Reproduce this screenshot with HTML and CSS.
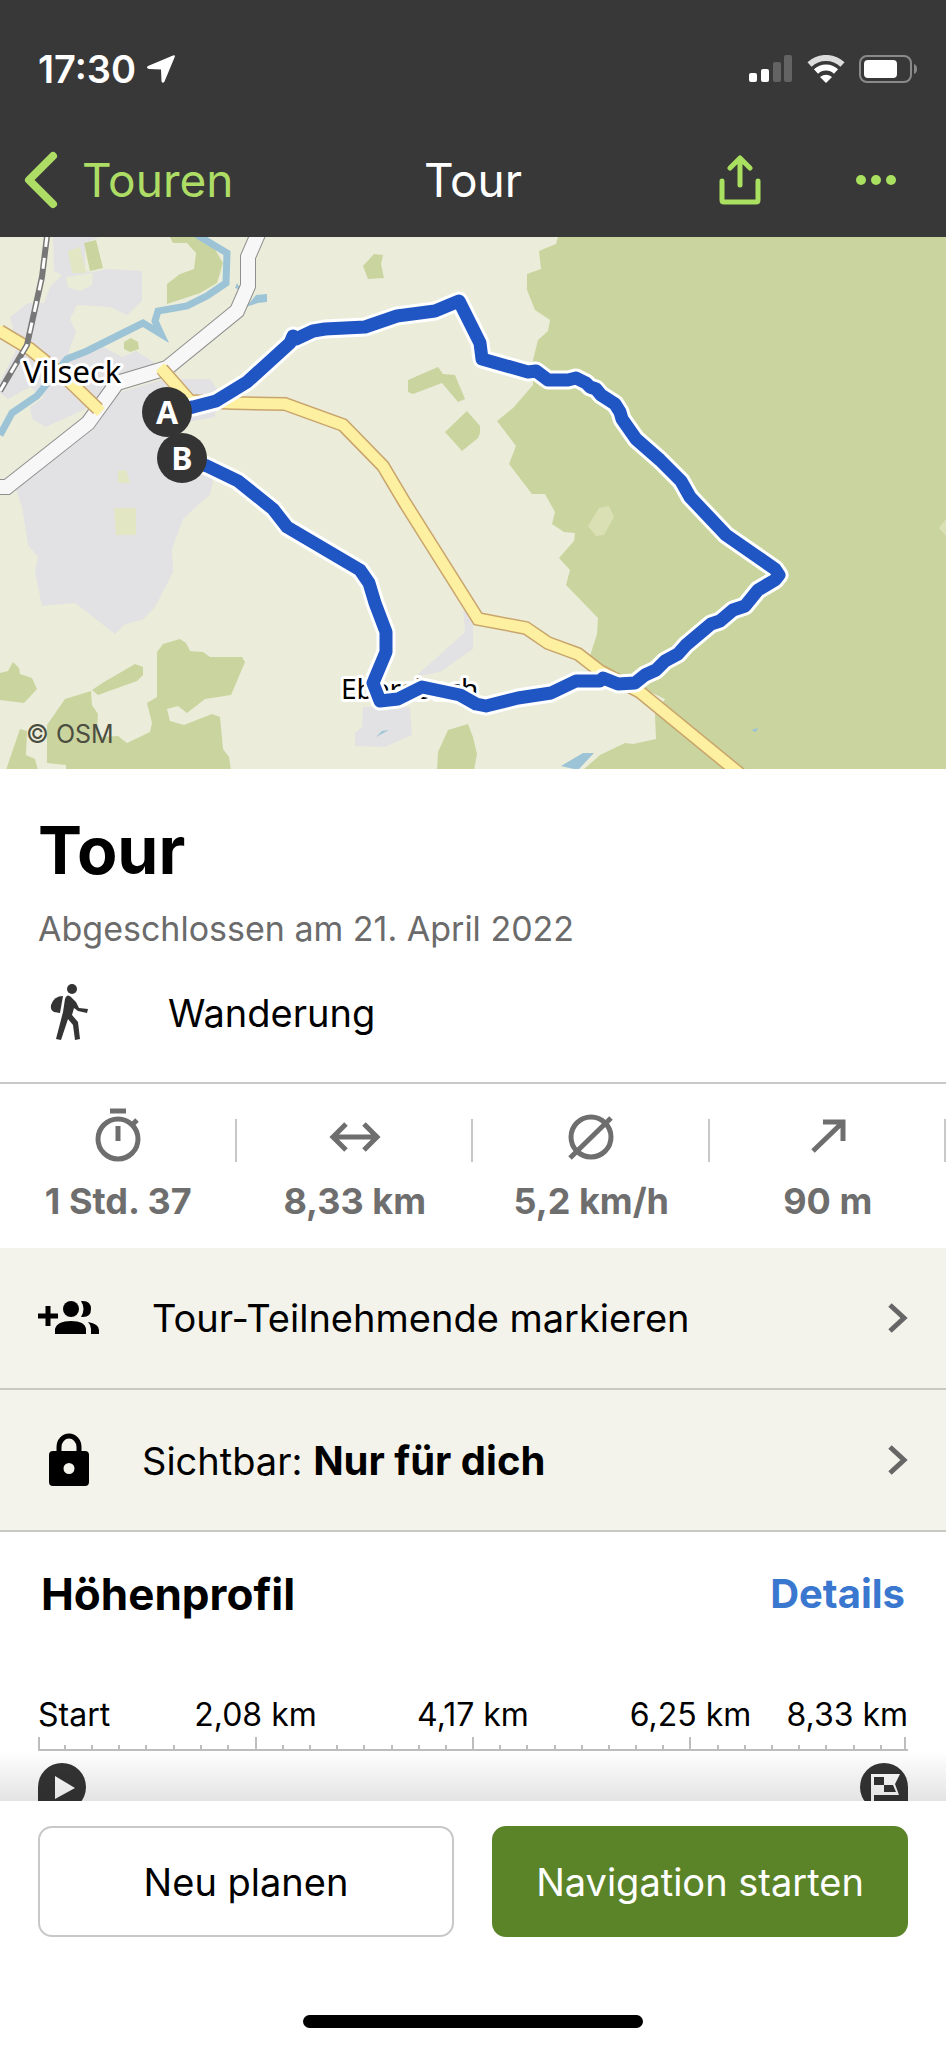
FILE: index.html
```html
<!DOCTYPE html>
<html lang="de">
<head>
  <meta charset="UTF-8">
  <meta name="viewport" content="width=device-width, initial-scale=1">
  <title>Tour</title>
  <link rel="stylesheet" href="styles.css">
</head>
<body>
  <div class="app">
    <header class="header">
      <div class="status-bar">
        <span class="time">17:30</span>
        <svg class="location" width="30" height="30" viewBox="0 0 30 30"><path d="M27 1.500Q29.500 .5 28.700 3L18.500 27.500Q17 30 15.500 27.500L15 15.500L3 15Q-.5 14 2 12Z" fill="#fff"/></svg>
        <div class="status-icons">
          <svg width="44" height="28" viewBox="0 0 44 28">
            <rect x="0" y="18" width="8" height="9" rx="2" fill="#fff"/>
            <rect x="12" y="14" width="8" height="13" rx="2" fill="#fff"/>
            <rect x="24" y="7" width="8" height="20" rx="2" fill="#636363"/>
            <rect x="35" y="0" width="8" height="27" rx="2" fill="#636363"/>
          </svg>
          <svg width="38" height="28" viewBox="0 0 38 28">
            <path d="M2.500 9.500A24 24 0 0 1 35.500 9.500" fill="none" stroke="#dcdcdc" stroke-width="6"/>
            <path d="M9 16.500A14.500 14.500 0 0 1 29 16.500" fill="none" stroke="#fff" stroke-width="6"/>
            <path d="M13 22Q19 17.500 25 22L19 28Z" fill="#fff"/>
          </svg>
          <svg width="59" height="28" viewBox="0 0 59 28">
            <rect x="1" y="1" width="51" height="26" rx="7" fill="none" stroke="#8a8a8a" stroke-width="2"/>
            <rect x="5" y="5" width="33" height="18" rx="4" fill="#fff"/>
            <path d="M55 9Q58 10 58 14T55 19Z" fill="#8a8a8a"/>
          </svg>
        </div>
      </div>
      <nav class="nav">
        <a class="back" href="#">
          <svg width="34" height="58" viewBox="0 0 34 58"><path d="M29 5L5 29L29 53" fill="none" stroke="currentColor" stroke-width="8" stroke-linecap="round" stroke-linejoin="round"/></svg>
          Touren
        </a>
        <span class="nav-title">Tour</span>
        <div class="nav-actions">
          <button class="icon-btn" type="button" aria-label="Teilen">
            <svg width="42" height="50" viewBox="0 0 42 50" fill="none" stroke="currentColor" stroke-width="5" stroke-linecap="round" stroke-linejoin="round"><path d="M21 30V3M11 13L21 3L31 13M3 26V45Q3 47 5 47H37Q39 47 39 45V26"/></svg>
          </button>
          <button class="icon-btn" type="button" aria-label="Mehr">
            <svg width="42" height="12" viewBox="0 0 42 12" fill="currentColor"><circle cx="6" cy="6" r="5"/><circle cx="21" cy="6" r="5"/><circle cx="36" cy="6" r="5"/></svg>
          </button>
        </div>
      </nav>
    </header>

    <main class="content">
      <!-- Karte mit Route -->
      <svg class="map" viewBox="0 0 946 532">
        <rect width="946" height="533" fill="#ebedda"/>
        <!-- Siedlungsflächen -->
        <g fill="#e2e2e4">
          <path d="M53 0H100L85 6V34L93 35L107 32L142 34V64L127 78L110 70L77 68L70 82L76 95L68 116L84 118L100 108L122 120L136 114L165 132L118 144L100 160L85 172L46 190L32 182L30 170L44 160L30 150L8 162L0 156V144L18 110L10 80L28 66L44 66L50 50L62 38L54 34Z"/>
          <path d="M15 250L84 196L120 155L165 142L210 142L217 152L215 180L160 190L215 235L210 258L200 266L183 282L172 312L173 335L155 370L142 383L125 387L115 397L75 366L42 369L35 335L38 320L28 308L22 270Z"/>
          <path d="M363 470H410L412 498L385 510L355 509V496L362 490ZM463 370L473 378V412L440 435L415 440L465 395Z"/>
        </g>
        <path d="M66 40L93 36L92 48L80 54L68 50Z" fill="#e9ecd6"/>
        <path d="M68 14L80 10L86 36L72 36ZM118 234L126 233L130 246L118 246ZM114 271H136V298H116Z" fill="#e2e6c3"/>
        <!-- Wald -->
        <g fill="#cad49e">
          <path d="M558 0L556 7L539 14L541 32L527 37V53L535 73L550 83L548 94L538 103L533 123V148L513 171L497 184L516 209L509 227L532 257H545L555 275L552 287L564 295L575 296L574 304L559 321L570 333L566 348L598 381L597 397L590 419L600 433L640 450L665 462L655 477L656 502L633 507L625 506L600 518L583 533H946V0Z"/>
          <path d="M170 0L173 6L187 6L196 16L194 32L180 37L167 47V67L200 56L217 46L223 26L213 9L200 0Z"/>
          <path d="M84 6L96 3L103 31L90 34ZM124 105L131 101L138 105L139 112L130 115L124 112ZM363 29L374 17L383 18L381 27L384 41L368 42Z"/>
          <path d="M408 143L438 130L443 137L455 138L465 162L458 165L442 146L413 157L408 155ZM467 174L480 189V196L478 201L462 214L445 195Z"/>
          <path d="M0 436L8 434L13 425L19 431L20 437L32 441L37 452L24 466L0 463ZM92 453L104 445L135 427L143 430V438L137 444L98 458Z"/>
          <path d="M65 462L91 454L92 468L98 477L97 493L100 500L118 499L127 506L150 495L152 486L147 466L157 460V415L163 407L180 402L186 406L190 414L203 415L210 420H242L245 425L231 458L205 462L187 476L178 469L167 472L170 484L184 488L212 477L220 480L223 512L229 520L231 533H66V528L47 526V488Z"/>
          <path d="M6 533L20 492L27 494L26 518L35 522L38 533ZM437 533L438 515L448 493L468 487L473 500L477 517L474 533Z"/>
        </g>
        <path d="M599 271L609 269L614 280L604 298L596 299L588 289ZM946 282L939 291L946 299Z" fill="#dbe0b4"/>
        <!-- Gewässer -->
        <path d="M197 -2L227 16L226 46L207 59L187 69L158 74L155 84L161 97L143 86L127 94L113 101L87 114L67 122L37 159L12 176L0 198" fill="none" stroke="#9dc4d6" stroke-width="7"/>
        <path d="M237 46L241 53L235 51ZM246 70L256 58L267 57V65L258 66ZM561 529L583 516H594L578 533ZM376 500L382 494L389 493ZM751 493L758 491L756 495Z" fill="#9dc4d6"/>
        <!-- Straßen -->
        <g fill="none">
          <path d="M258 -3L248 20V49L237 74L167 131L117 146L88 186L7 250H-5" stroke="#8f8f8f" stroke-width="16"/>
          <path d="M258 -3L248 20V49L237 74L167 131L117 146L88 186L7 250H-5" stroke="#f7f7f7" stroke-width="14"/>
          <path d="M0 94L30 112L67 142L98 172M162 132L190 164L233 166L285 167L343 188L383 229L405 266L478 382L526 391L548 406L578 417L600 434L640 455L740 537" stroke="#c9a46c" stroke-width="14"/>
          <path d="M-2 93L30 112L67 142L98 172L101 175M160 130L190 164L233 166L285 167L343 188L383 229L405 266L478 382L526 391L548 406L578 417L600 434L640 455L740 537" stroke="#fdf0a0" stroke-width="11"/>
          <path d="M47 -1L42 40L27 108L0 154" stroke="#777" stroke-width="6"/>
          <path d="M47 -1L42 40L27 108L0 154" stroke="#fff" stroke-width="3" stroke-dasharray="11 11"/>
        </g>
        <text class="place" x="23" y="146" font-size="31">Vilseck</text>
        <text class="place" x="341" y="462" font-size="28">Ebersbach</text>
        <!-- Aufgezeichnete Tour: weißer Rand, darüber die blaue Linie -->
        <defs>
          <path id="route" d="M167 175L193 170L216 164L247 145L290 106L293 99L296 102L313 94L325 92L365 90L397 79L435 74L459 64L480 106L482 122L528 135L536 134L548 143H568L576 141L586 146L590 150L596 152L601 158L615 167L620 175L622 182L636 202L660 223L681 244L690 260L726 298L775 332L779 338L775 343L758 353L745 369L733 373L720 384L711 387L686 408L678 417L665 424L656 433L645 438L635 446L618 447L603 441L600 444H576L551 456L518 461L486 469L476 467L460 458L422 450L398 462L380 464L373 446L386 415V395L375 366L369 346L360 333L287 290L273 272L238 244L207 229L182 221"/>
        </defs>
        <use href="#route" class="route-casing"/>
        <use href="#route" class="route-line"/>
        <circle cx="167" cy="175" r="25" fill="#343434"/>
        <circle cx="182" cy="221" r="25" fill="#343434"/>
        <text class="pin" x="167" y="187">A</text>
        <text class="pin" x="182" y="233">B</text>
        <text class="credit" x="26" y="506">© OSM</text>
      </svg>

      <section class="summary">
        <h1>Tour</h1>
        <p class="date">Abgeschlossen am 21. April 2022</p>
        <div class="sport">
          <svg width="58" height="58" viewBox="0 0 58 58" fill="#343434">
            <circle cx="34" cy="5" r="5"/>
            <path d="M25 12L22 29L16 28Q12 26 13 21Q16 12 25 12Z"/>
            <path d="M27 15Q29 9 33 13L38 18L41 24L50 25L49 29L40 27L36 24L34 31L40 38L42 55L37 56L35 41L30 35L23 56L18 55L25 28Z"/>
          </svg>
          <span>Wanderung</span>
        </div>
      </section>

      <section class="stats">
        <div class="stat">
          <svg width="54" height="54" viewBox="0 0 54 54" fill="none" stroke="currentColor" stroke-width="5"><circle cx="27" cy="31" r="20"/><path d="M19 3H35M27 18V33M41 17L46 12"/></svg>
          <strong>1 Std. 37</strong>
        </div>
        <div class="stat">
          <svg width="54" height="54" viewBox="0 0 54 54" fill="none" stroke="currentColor" stroke-width="5"><path d="M5 29H49M18 16L5 29L18 42M36 16L49 29L36 42"/></svg>
          <strong>8,33 km</strong>
        </div>
        <div class="stat">
          <svg width="54" height="54" viewBox="0 0 54 54" fill="none" stroke="currentColor" stroke-width="5"><circle cx="27" cy="29" r="20"/><path d="M6 50L47 10"/></svg>
          <strong>5,2 km/h</strong>
        </div>
        <div class="stat">
          <svg width="54" height="54" viewBox="0 0 54 54" fill="none" stroke="currentColor" stroke-width="5"><path d="M12 43L42 14M22 14H42V33"/></svg>
          <strong>90 m</strong>
        </div>
      </section>

      <button class="row" type="button">
        <svg class="row-icon" width="62" height="36" viewBox="0 0 62 36">
          <path d="M0 16H20M10 6V26" stroke="#000" stroke-width="5"/>
          <circle cx="33" cy="9" r="8"/>
          <path d="M17 34V29Q19 21 33 21T48 29V34ZM43 1Q53 0 53 9T43 17Q48 9 43 1ZM50 22Q61 24 61 30V34H53V29Q53 25 50 22Z"/>
        </svg>
        <span class="row-label">Tour-Teilnehmende markieren</span>
        <svg class="chevron" width="22" height="32" viewBox="0 0 22 32"><path d="M3 3L17 16L3 29" fill="none" stroke="#666" stroke-width="5"/></svg>
      </button>
      <button class="row row-lock" type="button">
        <svg class="row-icon" width="42" height="54" viewBox="0 0 42 54">
          <path d="M11 20V14A10 11 0 0 1 31 14V20" fill="none" stroke="#000" stroke-width="5"/>
          <path fill-rule="evenodd" d="M5 18H37Q41 18 41 22V49Q41 53 37 53H5Q1 53 1 49V22Q1 18 5 18ZM21 30A5 5 0 1 0 21 41A5 5 0 1 0 21 30Z"/>
        </svg>
        <span class="row-label">Sichtbar: <b>Nur für dich</b></span>
        <svg class="chevron" width="22" height="32" viewBox="0 0 22 32"><path d="M3 3L17 16L3 29" fill="none" stroke="#666" stroke-width="5"/></svg>
      </button>

      <section class="profile">
        <div class="profile-head">
          <h2>Höhenprofil</h2>
          <a href="#">Details</a>
        </div>
        <div class="axis-labels">
          <span>Start</span>
          <span>2,08 km</span>
          <span>4,17 km</span>
          <span>6,25 km</span>
          <span>8,33 km</span>
        </div>
        <svg class="axis" viewBox="0 0 870 14" preserveAspectRatio="none">
          <path d="M0 13H870M1 0V14M218 0V14M435 0V14M652 0V14M867 0V14M27 8V14M54 8V14M81 8V14M108 8V14M136 8V14M163 8V14M190 8V14M245 8V14M272 8V14M299 8V14M326 8V14M354 8V14M381 8V14M408 8V14M462 8V14M489 8V14M517 8V14M544 8V14M571 8V14M598 8V14M625 8V14M680 8V14M707 8V14M734 8V14M761 8V14M788 8V14M816 8V14M843 8V14" fill="none" stroke="#bdbdbd" stroke-width="2"/>
        </svg>
        <div class="axis-ends">
          <svg width="48" height="48" viewBox="0 0 48 48"><path d="M0 48V24A24 24 0 1 1 24 48Z" fill="#343434"/><path d="M17 13V36L37 25Z" fill="#fff"/></svg>
          <svg width="48" height="48" viewBox="0 0 48 48"><path d="M48 48V24A24 24 0 1 0 24 48Z" fill="#343434"/><path fill-rule="evenodd" d="M11 11H40L35 21L39 32H14V48H11ZM14 14V22H24V14ZM24 22V29H36L33 22Z" fill="#fff"/></svg>
        </div>
      </section>
    </main>

    <footer class="footer">
      <div class="actions">
        <button class="btn" type="button">Neu planen</button>
        <button class="btn btn-primary" type="button">Navigation starten</button>
      </div>
      <div class="home-indicator"></div>
    </footer>
  </div>
</body>
</html>
```
FILE: styles.css
```css
* {
  box-sizing: border-box;
}
body {
  margin: 0;
  background: #fff;
  color: #000;
  font-family: Inter, "Liberation Sans", sans-serif;
}
button {
  font: inherit;
  color: inherit;
  border: 0;
  padding: 0;
  background: none;
}
a {
  text-decoration: none;
}
svg {
  display: block;
  flex-shrink: 0;
}
h1, h2, p {
  margin: 0;
}
.app {
  display: flex;
  flex-direction: column;
  height: 100vh;
}

/* Kopfbereich */
.header {
  background: #383838;
  color: #fff;
}
.status-bar {
  display: flex;
  align-items: center;
  padding: 44px 28px 29px 38px;
  line-height: 50px;
}
.time {
  font-size: 38px;
  font-weight: 600;
}
.location {
  margin-left: 10px;
}
.status-icons {
  display: flex;
  gap: 14px;
  margin-left: auto;
}
.nav {
  display: grid;
  grid-template-columns: 1fr auto 1fr;
  align-items: center;
  height: 114px;
  padding: 0 24px;
  font-size: 46px;
}
.back {
  display: flex;
  align-items: center;
  gap: 24px;
  color: #aedd66;
}
.nav-actions {
  display: flex;
  justify-content: flex-end;
  align-items: center;
  gap: 94px;
  padding-right: 25px;
  color: #a9e05f;
}

/* Inhalt */
.content {
  position: relative;
  flex: 1;
  min-height: 0;
  overflow: hidden;
}
/* Schatten über der Fußleiste */
.content::after {
  content: "";
  position: absolute;
  left: 0;
  right: 0;
  bottom: 0;
  height: 50px;
  background: linear-gradient(rgba(0, 0, 0, 0), rgba(0, 0, 0, 0.11));
}
.map {
  width: 100%;
  height: auto;
}
.place {
  font-family: "Noto Sans", sans-serif;
  paint-order: stroke;
  stroke: #fff;
  stroke-width: 6px;
  stroke-linejoin: round;
}
.route-casing,
.route-line {
  fill: none;
  stroke: #fff;
  stroke-width: 19px;
  stroke-linejoin: round;
}
.route-line {
  stroke: #2055c4;
  stroke-width: 13px;
}
.pin {
  font-family: "Noto Sans", sans-serif;
  font-size: 32px;
  font-weight: 700;
  fill: #fff;
  text-anchor: middle;
}
.credit {
  font-size: 25px;
  fill: #4b4e40;
}
.summary {
  padding: 41px 38px 25px;
  border-bottom: 2px solid #c8c8c8;
}
.summary h1 {
  font-size: 66px;
  line-height: 80px;
}
.date {
  margin-top: 17px;
  font-size: 34px;
  line-height: 44px;
  color: #6b6b6b;
}
.sport {
  display: flex;
  align-items: center;
  gap: 72px;
  margin-top: 18px;
  height: 88px;
  font-size: 38px;
}
.stats {
  display: grid;
  grid-template-columns: repeat(4, 1fr);
  height: 164px;
  color: #6e6e6e;
}
.stat {
  position: relative;
  display: flex;
  flex-direction: column;
  align-items: center;
  gap: 12px;
  padding-top: 24px;
  font-size: 36px;
  line-height: 54px;
}
.stat::after {
  content: "";
  position: absolute;
  right: 0;
  top: 35px;
  width: 2px;
  height: 43px;
  background: #c8c8c8;
}
.row {
  display: flex;
  align-items: center;
  width: 100%;
  height: 142px;
  padding: 0 37px 0 38px;
  background: #f4f3eb;
  border-bottom: 2px solid #c8c8c4;
  font-size: 38px;
  text-align: left;
}
.row-label {
  flex: 1;
  margin-left: 52px;
}
.row-label b {
  font-size: 40px;
}
.row-lock {
  padding-left: 48px;
}
.profile {
  padding: 30px 38px 0;
}
.profile-head {
  display: flex;
  justify-content: space-between;
  align-items: center;
  padding: 0 3px;
  line-height: 64px;
}
.profile-head h2 {
  font-size: 44px;
}
.profile-head a {
  font-size: 40px;
  font-weight: 700;
  color: #3a78cf;
}
.axis-labels {
  display: grid;
  grid-template-columns: repeat(8, minmax(0, 1fr));
  margin-top: 69px;
  font-size: 32px;
  line-height: 40px;
  white-space: nowrap;
}
.axis-labels span {
  grid-column: span 2;
  justify-self: center;
}
.axis-labels span:first-child {
  grid-column: span 1;
  justify-self: start;
}
.axis-labels span:last-child {
  grid-column: span 1;
  justify-self: end;
}
.axis {
  width: 100%;
  height: 14px;
  margin-top: 2px;
}
.axis-ends {
  display: flex;
  justify-content: space-between;
  margin-top: 12px;
}

/* Fußleiste */
.footer {
  padding: 25px 38px 20px;
  background: #fff;
}
.actions {
  display: grid;
  grid-template-columns: 1fr 1fr;
  gap: 38px;
}
.btn {
  height: 111px;
  border: 2px solid #c8c8c8;
  border-radius: 14px;
  font-size: 38px;
}
.btn-primary {
  border-color: #5b8429;
  background: #5b8429;
  color: #fff;
}
.home-indicator {
  width: 39%;
  height: 13px;
  margin: 78px auto 0;
  border-radius: 7px;
  background: #000;
}
```
